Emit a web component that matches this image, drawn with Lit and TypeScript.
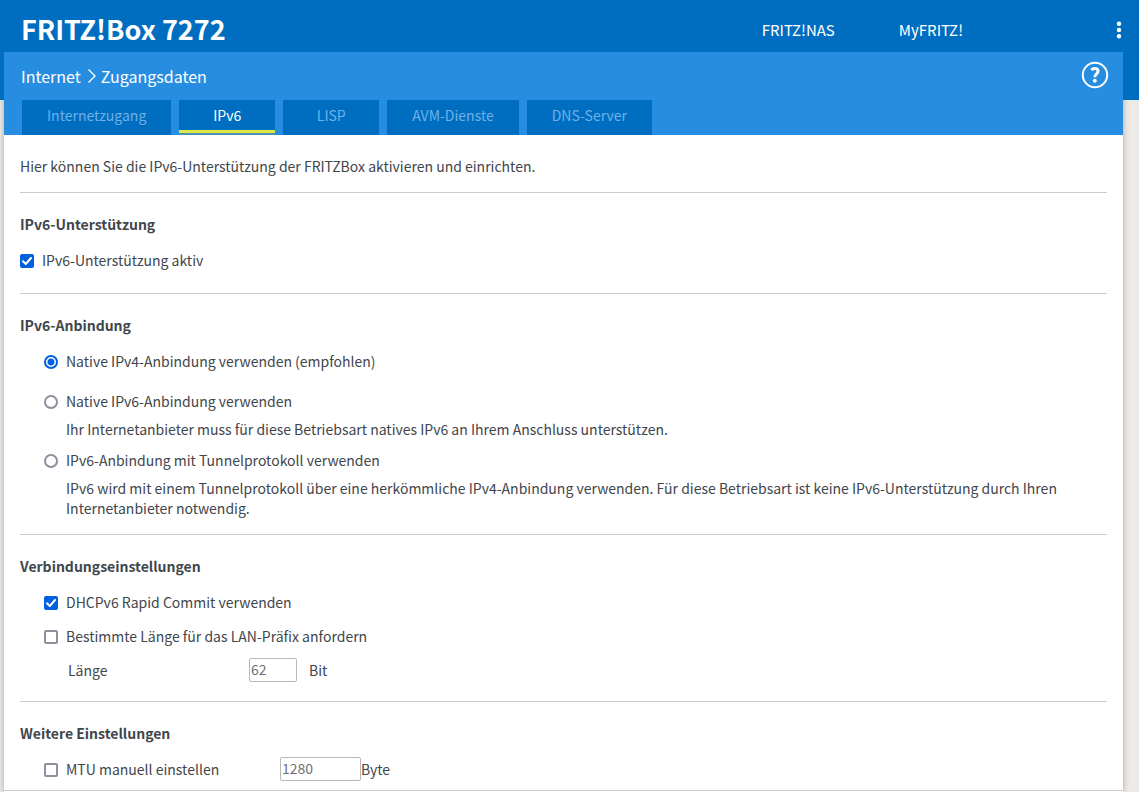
import { LitElement, html, css } from "lit";
import { customElement, state } from "lit/decorators.js";

const TABS = ["Internetzugang", "IPv6", "LISP", "AVM-Dienste", "DNS-Server"];

@customElement("app-root")
export class AppRoot extends LitElement {
  @state() private activeTab = "IPv6";

  static styles = css`
    :host {
      display: flex;
      flex-direction: column;
      box-sizing: border-box;
      min-height: 100vh;
      background: linear-gradient(#006ec0 100px, #eeebe6 100px);
      color: #3f464c;
      font-family: "Noto Sans CJK SC", "Noto Sans", sans-serif;
      font-size: 14px;
      line-height: 20px;
    }
    * {
      box-sizing: border-box;
    }
    h1, h2, p {
      margin: 0;
    }
    a {
      color: inherit;
      text-decoration: none;
    }
    button {
      padding: 0;
      border: 0;
      background: none;
      color: inherit;
      font: inherit;
      cursor: pointer;
    }
    .header {
      display: flex;
      align-items: center;
      height: 52px;
      padding: 6px 16px 0 21px;
      color: #fff;
    }
    .title {
      flex: 1;
      font-size: 27px;
      line-height: 40px;
      font-weight: 700;
    }
    .links {
      display: flex;
      gap: 64px;
      margin-right: 152px;
      padding-top: 2px;
      font-size: 15px;
    }
    .more {
      display: flex;
      padding-top: 2px;
    }
    .panel {
      flex: 1;
      margin: 0 16px 0 4px;
      background: #fff;
      box-shadow: 0 0 6px rgba(0, 0, 0, 0.3);
      clip-path: polygon(0 0, 100% 0, 100% 48px, calc(100% + 8px) 48px, calc(100% + 8px) 100%, -8px 100%, -8px 48px, 0 48px);
    }
    .bluebox {
      padding: 0 14px 0 18px;
      background: #268de0;
      color: #fff;
    }
    .crumbs {
      display: flex;
      align-items: center;
      height: 48px;
      padding-bottom: 2px;
      font-size: 16px;
    }
    .path {
      display: flex;
      flex: 1;
      align-items: center;
      gap: 4px;
      padding-top: 2px;
      margin-left: -1px;
    }
    .help {
      display: flex;
    }
    .tabs {
      display: flex;
      gap: 8px;
    }
    .tab {
      display: flex;
      flex-direction: column;
      align-items: center;
      min-width: 96px;
      height: 35px;
      padding: 5px 25px 0;
      background: #006ec0;
      color: #6db1ea;
    }
    .tab.active {
      background: linear-gradient(#006ec0 30px, #dde849 30px 33px, #4d8fae 33px);
      color: #fff;
    }
    .section {
      padding: 21px 0 0;
      margin: 0 16px;
      border-bottom: 1px solid #ccc;
    }
    .intro {
      padding-bottom: 16px;
    }
    .support {
      padding-bottom: 23px;
    }
    .binding {
      padding-bottom: 16px;
    }
    .connection {
      padding-bottom: 21px;
    }
    .further {
      padding: 21px 16px 11px;
      margin: 0;
    }
    .heading {
      margin-bottom: 16px;
      font-size: 14px;
      line-height: 20px;
      font-weight: 700;
    }
    .list {
      display: flex;
      flex-direction: column;
      padding-left: 24px;
    }
    .options {
      gap: 11px;
    }
    .first {
      margin-bottom: 9px;
    }
    .checks {
      gap: 14px;
    }
    .row {
      display: flex;
      align-items: center;
      gap: 8px;
      height: 20px;
    }
    .note {
      padding: 8px 0 0 22px;
    }
    .tick,
    .dot {
      appearance: none;
      flex: none;
      width: 14px;
      height: 14px;
      margin: 2px 0 0;
      border: 2px solid #8f8f9d;
      border-radius: 2px;
      background: #fff;
    }
    .tick:checked {
      border-color: #0060df;
      background: #0060df
        url("data:image/svg+xml,%3Csvg xmlns='http://www.w3.org/2000/svg' viewBox='0 0 14 14'%3E%3Cpath d='M3 7.2 5.8 10 11 4' fill='none' stroke='white' stroke-width='2' stroke-linecap='round' stroke-linejoin='round'/%3E%3C/svg%3E")
        center / 14px 14px no-repeat border-box;
    }
    .dot {
      border-radius: 50%;
    }
    .dot:checked {
      border-color: #0060df;
      background: radial-gradient(circle, #0060df 3px, #fff 4px);
    }
    .field {
      height: 24px;
      padding: 0 1px 2px;
      border: 1px solid #b8b8b8;
      border-radius: 2px;
      background: #fff;
      color: #6d7175;
      font: inherit;
    }
    .length {
      display: flex;
      align-items: center;
      height: 20px;
      padding-left: 24px;
    }
    .length-label {
      width: 181px;
    }
    .length-field {
      width: 48px;
      margin-right: 12px;
    }
    .mtu-label {
      width: 214px;
    }
    .mtu-field {
      width: 81px;
    }
    .mtu {
      gap: 0;
    }
    .mtu .tick {
      margin-right: 8px;
    }
  `;

  render() {
    return html`
      <header class="header">
        <h1 class="title">FRITZ!Box 7272</h1>
        <nav class="links">
          <a href="#nas">FRITZ!NAS</a>
          <a href="#myfritz">MyFRITZ!</a>
        </nav>
        <button class="more" aria-label="Menü">
          <svg width="8" height="18" viewBox="0 0 8 18" fill="#fff">
            <circle cx="4" cy="2.7" r="2.2" />
            <circle cx="4" cy="9" r="2.2" />
            <circle cx="4" cy="15.3" r="2.2" />
          </svg>
        </button>
      </header>
      <main class="panel">
        <div class="bluebox">
          <div class="crumbs">
            <div class="path">
              <a href="#internet">Internet</a>
              <svg width="12" height="16" viewBox="0 0 12 16" fill="none" stroke="#fff" stroke-width="1.3">
                <path d="M3.5 1.5 10 8 3.5 14.5" />
              </svg>
              <span>Zugangsdaten</span>
            </div>
            <button class="help" aria-label="Hilfe">
              <svg width="28" height="28" viewBox="0 0 28 28" fill="none" stroke="#fff">
                <circle cx="14" cy="14" r="12.2" stroke-width="2" />
                <path d="M10.4 9C12.2 6.9 17 6.9 17 10.2C17 12.9 13.8 13.2 13.8 16.2" stroke-width="3" />
                <circle cx="13.8" cy="19.8" r="2" fill="#fff" stroke="none" />
              </svg>
            </button>
          </div>
          <nav class="tabs">
            ${TABS.map(
              (tab) => html`<button
                class="tab ${tab === this.activeTab ? "active" : ""}"
                @click=${() => (this.activeTab = tab)}
              >${tab}</button>`
            )}
          </nav>
        </div>

        <p class="section intro">Hier können Sie die IPv6-Unterstützung der FRITZBox aktivieren und einrichten.</p>

        <section class="section support">
          <h2 class="heading">IPv6-Unterstützung</h2>
          <div class="row">
            <input class="tick" type="checkbox" id="ipv6" checked />
            <label for="ipv6">IPv6-Unterstützung aktiv</label>
          </div>
        </section>

        <section class="section binding">
          <h2 class="heading">IPv6-Anbindung</h2>
          <div class="list options">
            <div class="row first">
              <input class="dot" type="radio" name="mode" id="native4" checked />
              <label for="native4">Native IPv4-Anbindung verwenden (empfohlen)</label>
            </div>
            <div>
              <div class="row">
                <input class="dot" type="radio" name="mode" id="native6" />
                <label for="native6">Native IPv6-Anbindung verwenden</label>
              </div>
              <p class="note">Ihr Internetanbieter muss für diese Betriebsart natives IPv6 an Ihrem Anschluss unterstützen.</p>
            </div>
            <div>
              <div class="row">
                <input class="dot" type="radio" name="mode" id="tunnel" />
                <label for="tunnel">IPv6-Anbindung mit Tunnelprotokoll verwenden</label>
              </div>
              <p class="note">IPv6 wird mit einem Tunnelprotokoll über eine herkömmliche IPv4-Anbindung verwenden. Für diese Betriebsart ist keine IPv6-Unterstützung durch Ihren Internetanbieter notwendig.</p>
            </div>
          </div>
        </section>

        <section class="section connection">
          <h2 class="heading">Verbindungseinstellungen</h2>
          <div class="list checks">
            <div class="row">
              <input class="tick" type="checkbox" id="rapid" checked />
              <label for="rapid">DHCPv6 Rapid Commit verwenden</label>
            </div>
            <div class="row">
              <input class="tick" type="checkbox" id="prefix" />
              <label for="prefix">Bestimmte Länge für das LAN-Präfix anfordern</label>
            </div>
            <div class="length">
              <label class="length-label" for="length">Länge</label>
              <input class="field length-field" type="text" id="length" value="62" />
              <span>Bit</span>
            </div>
          </div>
        </section>

        <section class="section further">
          <h2 class="heading">Weitere Einstellungen</h2>
          <div class="list">
            <div class="row mtu">
              <input class="tick" type="checkbox" id="mtu" />
              <label class="mtu-label" for="mtu">MTU manuell einstellen</label>
              <input class="field mtu-field" type="text" aria-label="MTU" value="1280" />
              <span>Byte</span>
            </div>
          </div>
        </section>
      </main>
    `;
  }
}
